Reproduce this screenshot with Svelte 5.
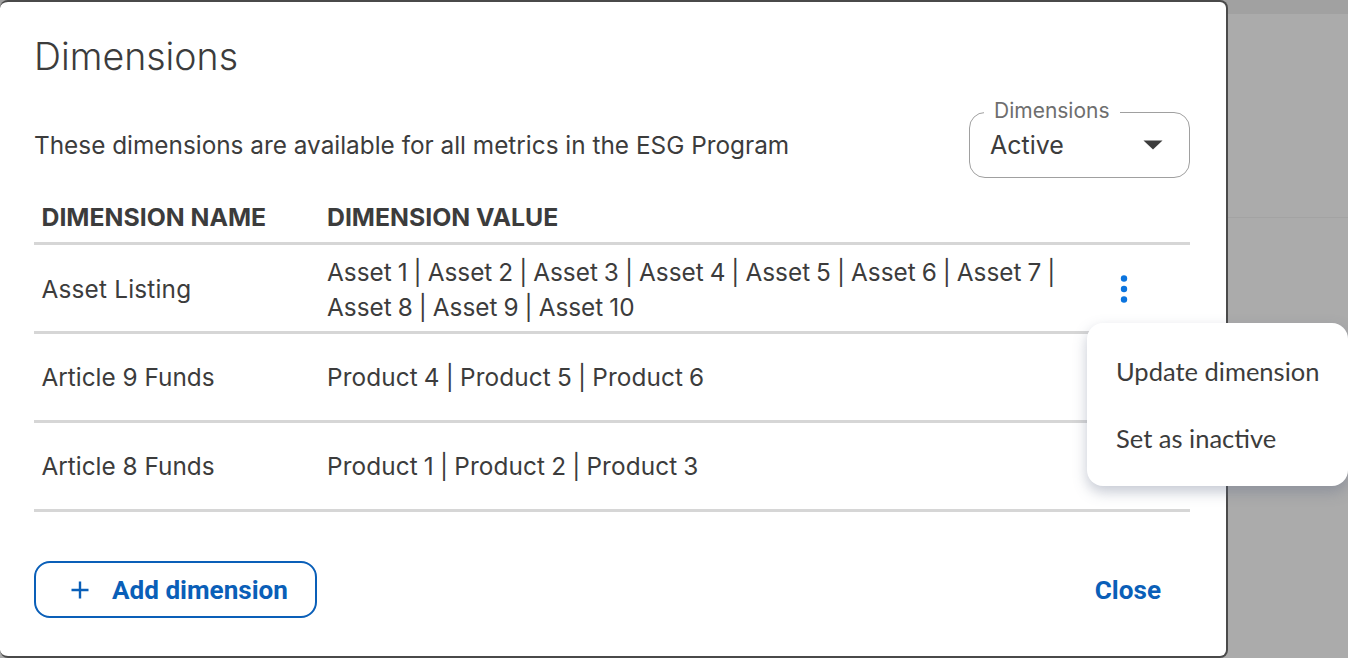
<script>
  const rows = [
    { name: 'Asset Listing', value: 'Asset 1 | Asset 2 | Asset 3 | Asset 4 | Asset 5 | Asset 6 | Asset 7 | Asset 8 | Asset 9 | Asset 10', menu: true },
    { name: 'Article 9 Funds', value: 'Product 4 | Product 5 | Product 6' },
    { name: 'Article 8 Funds', value: 'Product 1 | Product 2 | Product 3' }
  ];
</script>

<div class="stage">
  <div class="strip"></div>
  <div class="rule"></div>
  <section class="modal">
    <h1>Dimensions</h1>
    <div class="intro">
      <p>These dimensions are available for all metrics in the ESG Program</p>
      <div class="select">
        <span class="legend">Dimensions</span>
        <span class="current">Active</span>
        <svg class="caret" width="20" height="10" viewBox="0 0 20 10"><path d="M0.5 0.5H19.5L10 9.5Z" fill="#3c3c3c" /></svg>
      </div>
    </div>
    <div class="table">
      <div class="row head">
        <div class="c1">DIMENSION NAME</div>
        <div class="c2">DIMENSION VALUE</div>
      </div>
      {#each rows as r}
        <div class="row body" class:tall={r.menu}>
          <div class="c1">{r.name}</div>
          <div class="c2">{r.value}</div>
          {#if r.menu}
            <svg class="kebab" width="8" height="30" viewBox="0 0 8 30">
              <circle cx="4" cy="4.5" r="3.2" fill="#0b74de" />
              <circle cx="4" cy="15" r="3.2" fill="#0b74de" />
              <circle cx="4" cy="25.5" r="3.2" fill="#0b74de" />
            </svg>
          {/if}
        </div>
      {/each}
    </div>
    <div class="actions">
      <button class="add">
        <svg width="18" height="18" viewBox="0 0 18 18"><path d="M9 0.5V17.5M0.5 9H17.5" stroke="#0a5fb8" stroke-width="2.4" fill="none" /></svg>
        Add dimension
      </button>
      <button class="close">Close</button>
    </div>
  </section>
  <div class="menu">
    <div>Update dimension</div>
    <div>Set as inactive</div>
  </div>
</div>

<style>
  :global(body) { margin: 0; background: #fff; }
  .stage {
    position: relative;
    width: 1348px;
    height: 658px;
    background: #ababab;
    overflow: hidden;
    font-family: "Inter", sans-serif;
    color: #3c3c3c;
  }
  .strip { position: absolute; left: 0; right: 0; top: 0; height: 14px; background: #a1a1a1; }
  .rule { position: absolute; left: 0; right: 0; top: 217px; height: 1px; background: #a3a3a3; }
  .modal {
    position: relative;
    box-sizing: border-box;
    width: 1228px;
    height: 658px;
    background: #fff;
    border: 2px solid #4a4a4a;
    border-left: 0;
    border-radius: 8px;
    padding: 0 36px 0 34px;
  }
  h1 {
    margin: 0;
    padding-top: 33px;
    font-size: 37.5px;
    line-height: 44px;
    font-weight: 300;
  }
  .intro {
    display: flex;
    justify-content: space-between;
    align-items: center;
    margin-top: 33px;
    height: 66px;
  }
  .intro p { margin: 0; font-size: 24.35px; }
  .select {
    position: relative;
    box-sizing: border-box;
    width: 221px;
    height: 66px;
    border: 1.5px solid #a0a0a0;
    border-radius: 16px;
    display: flex;
    align-items: center;
    justify-content: space-between;
    padding: 0 26px 0 20px;
  }
  .legend {
    position: absolute;
    left: 14px;
    top: -14px;
    background: #fff;
    padding: 0 10px;
    font-size: 21px;
    line-height: 24px;
    color: #6e6e6e;
  }
  .current { font-size: 25px; }
  .table { margin-top: 16px; }
  .row {
    display: flex;
    align-items: center;
    position: relative;
    border-bottom: 3px solid #d6d6d6;
  }
  .head { height: 51px; padding-bottom: 2px; box-sizing: border-box; font-weight: 700; font-size: 24.8px; }
  .body { height: 89px; box-sizing: border-box; font-size: 24.35px; }
  .c1 { width: 293px; padding-left: 7.5px; box-sizing: border-box; }
  .c2 { width: 735px; line-height: 35px; }
  .body .c2 { word-spacing: -0.85px; letter-spacing: 0.1px; }
  .tall .c1 { padding-top: 2px; letter-spacing: 0.2px; }
  .tall .c2 { padding-top: 4px; letter-spacing: 0; }
  .kebab { position: absolute; left: 1086px; top: 29px; }
  .actions {
    display: flex;
    justify-content: space-between;
    align-items: center;
    margin-top: 49px;
    height: 57px;
  }
  button { font-family: "Roboto", sans-serif; font-weight: 700; font-size: 26.1px; color: #0a5fb8; background: none; border: 0; padding: 0; }
  .add {
    box-sizing: border-box;
    width: 283px;
    height: 57px;
    border: 2px solid #0a5fb8;
    border-radius: 16px;
    display: flex;
    align-items: center;
    gap: 23px;
    padding-left: 35px;
  }
  .close { margin-right: 29px; }
  .menu {
    position: absolute;
    left: 1087px;
    top: 323px;
    width: 261px;
    height: 163px;
    box-sizing: border-box;
    background: #fff;
    border-radius: 16px;
    box-shadow: 0 6px 14px rgba(90, 100, 130, 0.35);
    font-family: "Lato", sans-serif;
    font-size: 25.5px;
    padding: 15px 0 0 29px;
  }
  .menu div { height: 67px; line-height: 67px; }
</style>
